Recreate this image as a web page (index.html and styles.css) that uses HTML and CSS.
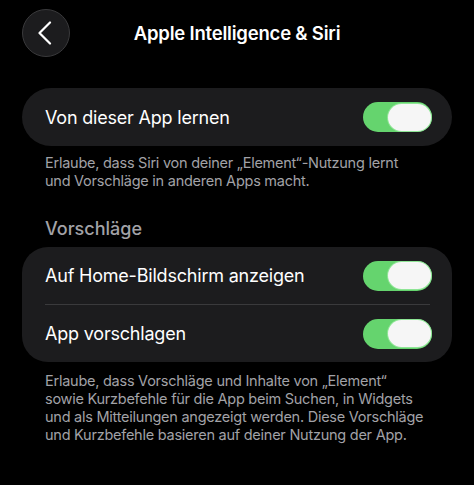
FILE: index.html
```html
<!DOCTYPE html>
<html lang="de">
<head>
    <meta charset="UTF-8">
    <meta name="viewport" content="width=device-width, initial-scale=1.0">
    <title>Apple Intelligence &amp; Siri</title>
    <link rel="stylesheet" href="styles.css">
</head>
<body>
    <div class="page">
        <div class="nav">
            <button class="back-button" type="button" aria-label="Zurück">
                <svg width="14" height="24" viewBox="0 0 14 24">
                    <path d="M12 1.5 L1.5 12 L12 22.5" fill="none" stroke="#fff" stroke-width="2.2" stroke-linecap="round" stroke-linejoin="round"/>
                </svg>
            </button>
            <div class="nav-title">Apple Intelligence &amp; Siri</div>
        </div>

        <div class="card card-single">
            <div class="row">
                <span class="row-label">Von dieser App lernen</span>
                <span class="switch"><span class="knob"></span></span>
            </div>
        </div>
        <p class="footnote first">Erlaube, dass Siri von deiner „Element“-Nutzung lernt<br>und Vorschläge in anderen Apps macht.</p>

        <div class="section-title">Vorschläge</div>
        <div class="card">
            <div class="row">
                <span class="row-label">Auf Home-Bildschirm anzeigen</span>
                <span class="switch"><span class="knob"></span></span>
            </div>
            <div class="divider"></div>
            <div class="row">
                <span class="row-label">App vorschlagen</span>
                <span class="switch"><span class="knob"></span></span>
            </div>
        </div>
        <p class="footnote second">Erlaube, dass Vorschläge und Inhalte von „Element“<br>sowie Kurzbefehle für die App beim Suchen, in Widgets<br>und als Mitteilungen angezeigt werden. Diese Vorschläge<br>und Kurzbefehle basieren auf deiner Nutzung der App.</p>
    </div>
</body>
</html>
```

FILE: styles.css
```css
body {
    margin: 0;
    padding: 0;
    background-color: #000;
    color: #fff;
    font-family: Inter, "Noto Sans", sans-serif;
    -webkit-font-smoothing: antialiased;
}
.page {
    padding: 0 22px;
}
.nav {
    display: grid;
    grid-template-columns: 48px 1fr 48px;
    align-items: center;
    padding-top: 9px;
    height: 48px;
}
.back-button {
    width: 48px;
    height: 48px;
    border-radius: 50%;
    background-color: #1c1c1e;
    border: 1px solid #3a3a3c;
    box-sizing: border-box;
    display: flex;
    align-items: center;
    justify-content: center;
    padding: 0 3px 0 0;
    cursor: pointer;
}
.nav-title {
    text-align: center;
    font-size: 18.5px;
    font-weight: 600;
    letter-spacing: -0.2px;
}
.card {
    background-color: #1c1c1e;
    border-radius: 26px;
    padding: 0 20px 0 23px;
}
.card-single {
    margin-top: 31px;
    border-radius: 29px;
}
.row {
    display: flex;
    align-items: center;
    justify-content: space-between;
    height: 57px;
}
.card-single .row {
    height: 58px;
}
.row-label {
    font-size: 18px;
    letter-spacing: -0.2px;
}
.divider {
    height: 1px;
    background-color: #3a3a3c;
    margin-right: 2px;
}
.switch {
    width: 69px;
    height: 30px;
    border-radius: 15px;
    background-color: #65d46e;
    display: flex;
    align-items: center;
    justify-content: flex-end;
    padding: 0 1px;
    box-sizing: border-box;
}
.knob {
    width: 43px;
    height: 27px;
    border-radius: 14px;
    background-color: #f6f6f6;
    box-shadow: 0 0 0 1px #8fe596;
}
.footnote {
    margin: 0;
    padding: 0 0 0 23px;
    font-size: 14.5px;
    line-height: 18px;
    color: #a2a2a7;
    letter-spacing: -0.25px;
    white-space: nowrap;
}
.footnote.first {
    margin-top: 8px;
}
.footnote.second {
    margin-top: 10px;
}
.section-title {
    margin-top: 28px;
    margin-bottom: 7px;
    padding: 0 23px;
    font-size: 18px;
    line-height: 22px;
    font-weight: 500;
    color: #a2a2a7;
}
```
